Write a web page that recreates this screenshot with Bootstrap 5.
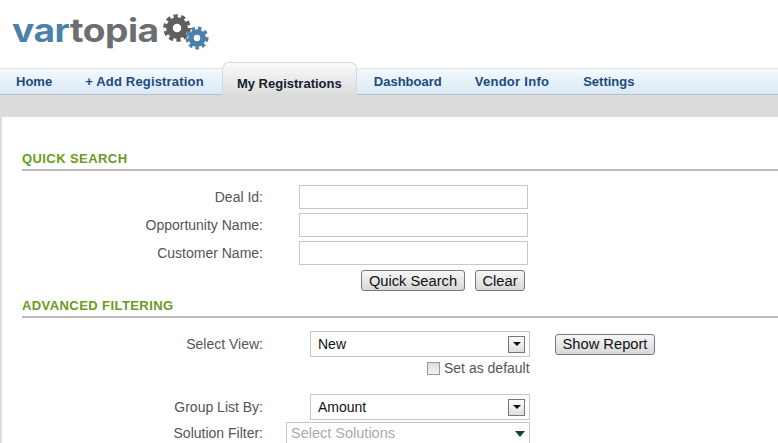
<!DOCTYPE html>
<html lang="en">
<head>
    <meta charset="UTF-8">
    <meta name="viewport" content="width=device-width, initial-scale=1.0">
    <title>Vartopia - My Registrations</title>
    <link href="https://cdn.jsdelivr.net/npm/bootstrap@5.3.2/dist/css/bootstrap.min.css" rel="stylesheet">
    <style>
        html, body { height: 443px; overflow: hidden; }
        body { font-family: "Liberation Sans", Arial, sans-serif; font-size: 14px; color: #555; background: #fff; }

        .logo-bar { height: 62px; padding: 10px 0 0 12px; }
        .logo-text { width: 146px; font-family: Inter, "Liberation Sans", sans-serif; font-weight: 700; font-size: 32px; line-height: 41px; letter-spacing: -.4px; color: #6d6e71; white-space: nowrap; transform: scaleX(1.16); transform-origin: left center; }
        .logo-text span { color: #4a80a9; }

        .tab-strip { height: 33px; padding-top: 6px; }
        .tab-bg { height: 27px; background: linear-gradient(#f4f9fd, #d9e9f6); border-top: 1px solid #dfe4e8; border-bottom: 1px solid #b8bfc4; }
        .tab-row { margin-top: -33px; height: 33px; align-items: flex-end; }
        .tab-link { font-size: 13px; font-weight: 700; color: #1c4a80; text-decoration: none; height: 27px; line-height: 28px; white-space: nowrap; }
        .tab-active { height: 33px; width: 135px; line-height: 41px; text-align: center; color: #15202e; background: linear-gradient(#fafafa, #dcdcdc); border: 1px solid #d9d9d9; border-bottom: 0; border-radius: 7px 7px 0 0; }

        .grey-band { height: 22px; background: #dcdcdc; }
        .page-body { border-left: 2px solid #dcdcdc; padding: 33px 0 0 20px; }

        .section-head { font-size: 13px; font-weight: 700; color: #6b9a1c; height: 21px; line-height: 17px; border-bottom: 2px solid #bbb; letter-spacing: .42px; }
        .field-row { height: 28px; align-items: flex-start; }
        .field-label { width: 241px; text-align: right; line-height: 24px; }
        .field-input { width: 229px; height: 24px; margin-left: 36px; border: 1px solid #c8c8c8; background: #fff; }

        .old-btn { font-family: "Liberation Sans", Arial, sans-serif; font-size: 14.7px; color: #111; height: 21px; line-height: 18px; padding: 0; border: 1px solid #777; border-radius: 3px; background: linear-gradient(#f6f6f6, #d8d8d8); }

        .pick { width: 220px; height: 26px; border: 1px solid #c8c8c8; color: #111; line-height: 24px; padding-left: 7px; }
        .pick-arrow { width: 17px; height: 17px; margin-right: 4px; border: 1px solid #777; background: linear-gradient(#fdfdfd, #dedede); }
        .pick-arrow::after { content: ""; border-left: 4px solid transparent; border-right: 4px solid transparent; border-top: 4px solid #111; }
        .solution-box { width: 244px; height: 30px; margin-left: 23px; border: 1px solid #c8c8c8; border-bottom: 0; padding-left: 4px; color: #aaa; font-size: 14.5px; line-height: 21px; }
        .solution-arrow { margin: 8px 4px 0 0; border-left: 5px solid transparent; border-right: 5px solid transparent; border-top: 6px solid #14403f; }
        .default-check { width: 13px; height: 13px; border: 1px solid #999; background: linear-gradient(#dcdcdc, #f6f6f6); }
    </style>
</head>
<body>
    <div class="logo-bar d-flex">
        <div class="logo-text"><span>var</span>topia</div>
        <svg width="52" height="42" viewBox="0 0 52 42" aria-hidden="true">
            <g fill="none">
                <circle cx="19" cy="18" r="7.5" stroke="#5f5f60" stroke-width="6.5"/>
                <circle cx="19" cy="18" r="11.8" stroke="#5f5f60" stroke-width="4" stroke-dasharray="4.2 3.2"/>
                <circle cx="39" cy="28" r="6" stroke="#4a80a9" stroke-width="5.5"/>
                <circle cx="39" cy="28" r="9.7" stroke="#4a80a9" stroke-width="3.6" stroke-dasharray="3.5 3.12"/>
            </g>
        </svg>
    </div>

    <div class="tab-strip"><div class="tab-bg"></div></div>
    <nav class="tab-row d-flex">
        <a class="tab-link ms-3" href="#">Home</a>
        <a class="tab-link" href="#" style="margin-left:33px;letter-spacing:.18px">+ Add Registration</a>
        <a class="tab-link tab-active" href="#" style="margin-left:18px">My Registrations</a>
        <a class="tab-link" href="#" style="margin-left:17px">Dashboard</a>
        <a class="tab-link" href="#" style="margin-left:33px;letter-spacing:.27px">Vendor Info</a>
        <a class="tab-link" href="#" style="margin-left:34px">Settings</a>
    </nav>
    <div class="grey-band"></div>

    <div class="page-body">
        <div class="section-head">QUICK SEARCH</div>
        <div style="margin-top:14px">
            <div class="field-row d-flex"><div class="field-label">Deal Id:</div><div class="field-input"></div></div>
            <div class="field-row d-flex"><div class="field-label">Opportunity Name:</div><div class="field-input"></div></div>
            <div class="field-row d-flex"><div class="field-label">Customer Name:</div><div class="field-input"></div></div>
        </div>
        <div class="d-flex" style="padding-left:339px;margin-top:1px">
            <button class="old-btn" style="width:104px">Quick Search</button>
            <button class="old-btn" style="width:50px;margin-left:10px">Clear</button>
        </div>
        <div class="section-head" style="margin-top:6px">ADVANCED FILTERING</div>

        <div class="d-flex align-items-center" style="margin-top:13px">
            <div class="field-label">Select View:</div>
            <div class="pick d-flex justify-content-between align-items-center" style="margin-left:47px">New<span class="pick-arrow d-flex align-items-center justify-content-center"></span></div>
            <button class="old-btn" style="width:100px;margin-left:25px">Show Report</button>
        </div>
        <div class="d-flex align-items-center" style="padding-left:405px;margin-top:5px;height:13px">
            <span class="default-check"></span><span class="ms-1">Set as default</span>
        </div>
        <div class="d-flex align-items-center" style="margin-top:19px">
            <div class="field-label">Group List By:</div>
            <div class="pick d-flex justify-content-between align-items-center" style="margin-left:47px">Amount<span class="pick-arrow d-flex align-items-center justify-content-center"></span></div>
        </div>
        <div class="d-flex" style="margin-top:2px">
            <div class="field-label" style="line-height:22px">Solution Filter:</div>
            <div class="solution-box d-flex justify-content-between">Select Solutions<span class="solution-arrow"></span></div>
        </div>
    </div>
</body>
</html>
